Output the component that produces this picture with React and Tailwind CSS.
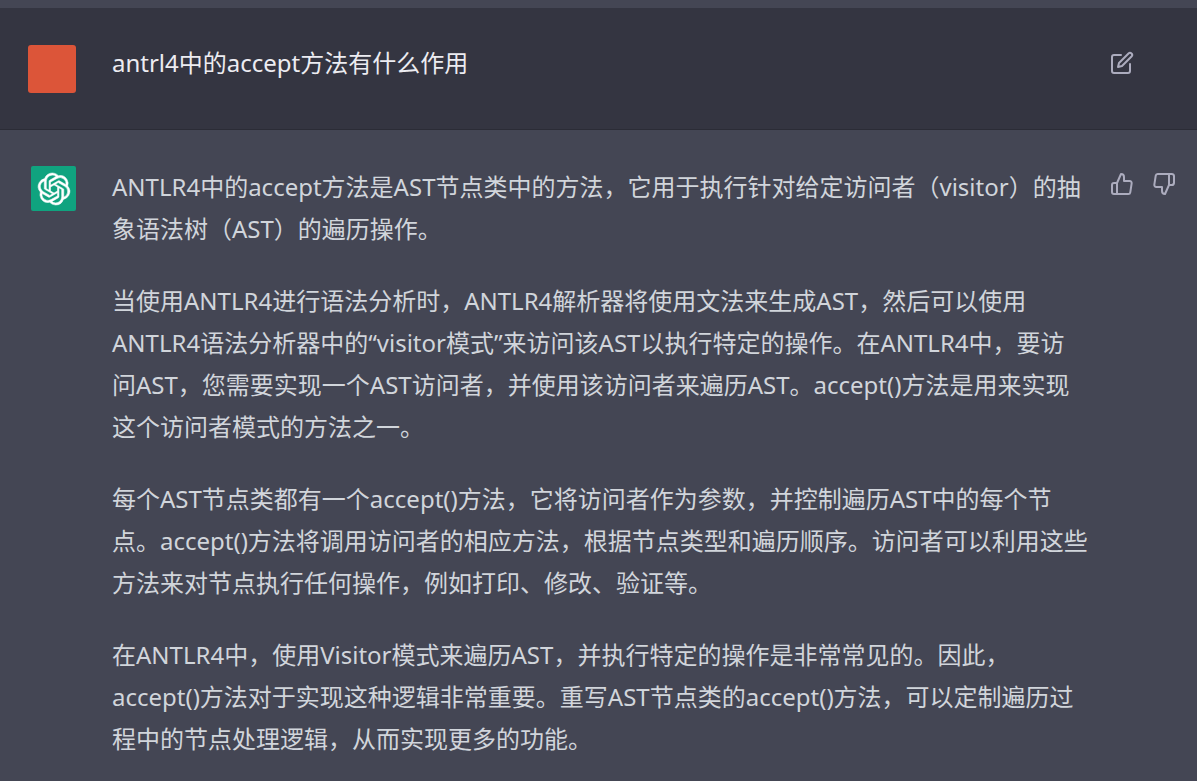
import { FiEdit, FiThumbsUp, FiThumbsDown } from "react-icons/fi";
import { SiOpenai } from "react-icons/si";

const answer = [
  ["ANTLR4中的accept方法是AST节点类中的方法，它用于执行针对给定访问者（visitor）的抽", "象语法树（AST）的遍历操作。"],
  ["当使用ANTLR4进行语法分析时，ANTLR4解析器将使用文法来生成AST，然后可以使用", "ANTLR4语法分析器中的“visitor模式”来访问该AST以执行特定的操作。在ANTLR4中，要访", "问AST，您需要实现一个AST访问者，并使用该访问者来遍历AST。accept()方法是用来实现", "这个访问者模式的方法之一。"],
  ["每个AST节点类都有一个accept()方法，它将访问者作为参数，并控制遍历AST中的每个节", "点。accept()方法将调用访问者的相应方法，根据节点类型和遍历顺序。访问者可以利用这些", "方法来对节点执行任何操作，例如打印、修改、验证等。"],
  ["在ANTLR4中，使用Visitor模式来遍历AST，并执行特定的操作是非常常见的。因此，", "accept()方法对于实现这种逻辑非常重要。重写AST节点类的accept()方法，可以定制遍历过", "程中的节点处理逻辑，从而实现更多的功能。"],
];

export default function App() {
  return (
    <main lang="zh-CN" className="min-h-screen bg-[#444654] pt-2 font-['Noto_Sans','Noto_Sans_CJK_SC',sans-serif] text-[24px] leading-[42px] text-[#d1d5db]">
      <section className="flex items-start border-b border-[#2b2c36] bg-[#343541] pt-[37px] pr-[63px] pb-9 pl-7 text-[#ececf1]">
        <div className="mr-9 size-12 shrink-0 rounded-[3px] bg-[#dc5539]" />
        <p className="-mt-[3px] grow whitespace-nowrap">antrl4中的accept方法有什么作用</p>
        <button aria-label="编辑" className="mt-1.5 text-[#acacbe]"><FiEdit size={24} /></button>
      </section>
      <section className="flex items-start pt-9 pr-[21px] pl-[31px]">
        <div className="mr-9 flex size-[45px] shrink-0 items-center justify-center rounded-xs bg-[#10a37f] text-white">
          <SiOpenai size={32} className="overflow-visible stroke-white [stroke-width:0.4]" />
        </div>
        <div className="min-w-0 grow space-y-[30px]">
          {answer.map((lines) => (
            <p key={lines[0]} className="whitespace-nowrap">
              {lines.map((line) => <span key={line} className="block">{line}</span>)}
            </p>
          ))}
        </div>
        <div className="mt-1.5 flex shrink-0 gap-[18px] text-[#acacbe]">
          <button aria-label="赞"><FiThumbsUp size={24} /></button>
          <button aria-label="踩"><FiThumbsDown size={24} /></button>
        </div>
      </section>
    </main>
  );
}
